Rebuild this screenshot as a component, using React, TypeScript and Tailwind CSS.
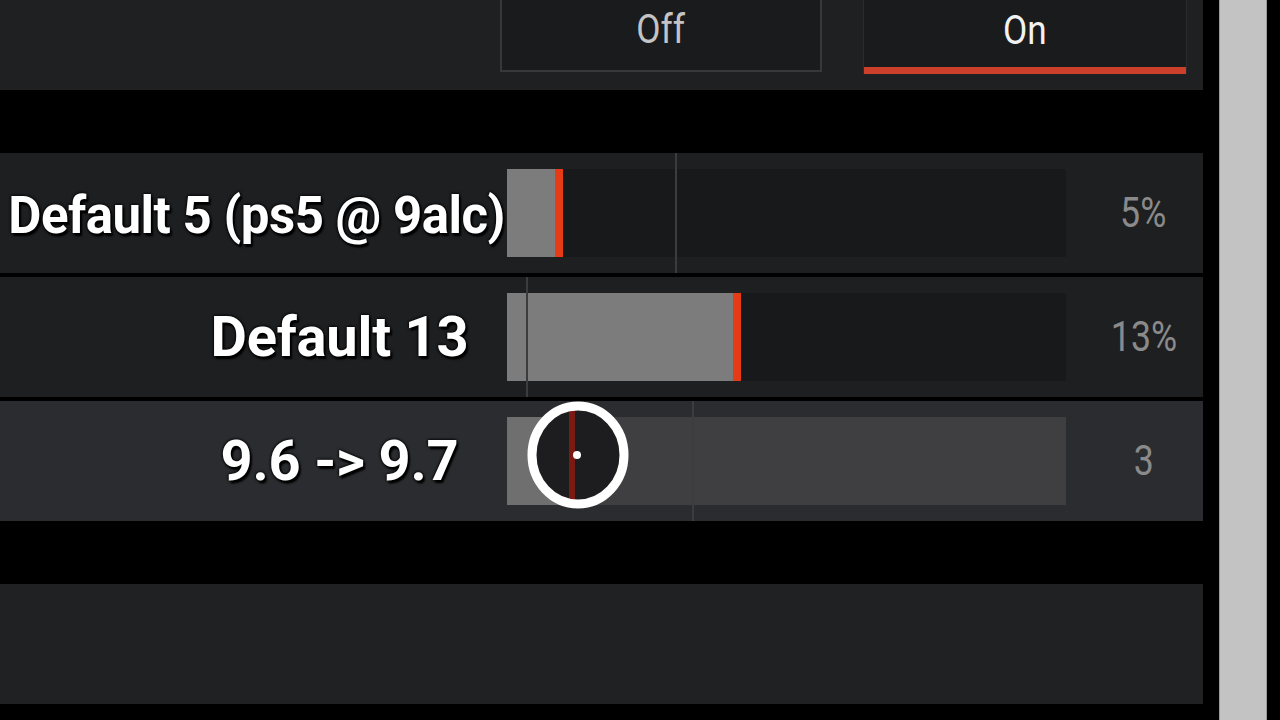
import React from "react";

// Settings rows with sliders, like a console game menu.
interface SliderRowProps {
  label: string;
  align: "right" | "center";
  fill: number; // width of fill in px
  marker: number; // x of the reference line within the row, px
  value: string;
  light?: boolean;
  cursor?: boolean;
  small?: boolean;
}

const labelShadow =
  "[text-shadow:0_0_3px_#000,0_0_3px_#000,2px_3px_2px_#000]";

const SliderRow: React.FC<SliderRowProps> = ({
  label,
  align,
  fill,
  marker,
  value,
  light,
  cursor,
  small,
}) => {
  return (
    <div
      className={`relative flex items-center h-[120px] ${
        light ? "bg-[#2b2c2f]" : "bg-[#1e1f21]"
      }`}
    >
      <div className="w-[507px] h-full flex items-center justify-end">
        <div
          className={
            align === "center"
              ? "w-[335px] flex justify-center"
              : "flex justify-end pr-[2px] pt-[4px]"
          }
        >
          <span
            className={`whitespace-nowrap text-white font-bold leading-none ${
              small
                ? "text-[51px] tracking-[-0.5px]"
                : "text-[56px] tracking-[-0.2px]"
            } ${labelShadow}`}
            style={{ fontFamily: "Roboto, 'Noto Sans', sans-serif" }}
          >
            {label}
          </span>
        </div>
      </div>

      <div
        className={`flex h-[88px] w-[559px] ${
          light ? "bg-[#3f3f42]" : "bg-[#18191b]"
        }`}
      >
        <div
          className={`h-full ${light ? "bg-[#6f6f6f]" : "bg-[#7c7c7c]"}`}
          style={{ width: fill }}
        />
        {!light && <div className="h-full w-[8px] bg-[#e63b17]" />}
      </div>

      <div className="flex-1 flex justify-center pl-[18px]">
        <span
          className="text-[42px] leading-none text-[#8a8a8a] scale-x-[0.85]"
          style={{ fontFamily: "Roboto, 'Noto Sans', sans-serif" }}
        >
          {value}
        </span>
      </div>

      {/* reference marker line */}
      <div
        className="absolute top-0 bottom-0 w-[2px] bg-[#3b3c3f]"
        style={{ left: marker }}
      />

      {cursor && (
        <svg
          className="absolute left-[524px] top-[-2px]"
          width="108"
          height="112"
          viewBox="0 0 108 112"
        >
          <ellipse cx="54" cy="56" rx="46" ry="49" fill="#1d1d1f" />
          <rect x="45" y="8" width="6" height="96" fill="#7a1a12" />
          <ellipse
            cx="54"
            cy="56"
            rx="46"
            ry="49"
            fill="none"
            stroke="#ffffff"
            strokeWidth="9"
          />
          <circle cx="53" cy="56" r="4" fill="#ffffff" />
        </svg>
      )}
    </div>
  );
};

export default function App() {
  const condensed = { fontFamily: "Roboto, 'Noto Sans', sans-serif" };
  return (
    <div className="w-[1280px] h-[720px] bg-black flex overflow-hidden">
      <div className="w-[1203px] flex flex-col">
        {/* top toggle panel */}
        <div className="h-[90px] bg-[#1f2022] flex pl-[500px] gap-[41px]">
          <div className="w-[322px] h-[72px] bg-[#1a1b1d] border-x-2 border-b-2 border-[#37383a] flex items-center justify-center">
            <span
              className="text-[40px] leading-none text-[#c4c4c4] scale-x-[0.88] -mt-[10px]"
              style={condensed}
            >
              Off
            </span>
          </div>
          <div className="w-[324px] h-[74px] bg-[#1a1b1d] border-x border-[#2a2b2d] flex flex-col">
            <div className="flex-1 flex items-center justify-center">
              <span
                className="text-[40px] leading-none text-[#f2f2f2] scale-x-[0.88] -mt-[6px]"
                style={condensed}
              >
                On
              </span>
            </div>
            <div className="h-[7px] bg-[#cc3f2b]" />
          </div>
        </div>

        <div className="h-[63px]" />

        <div className="flex flex-col gap-[4px]">
          <SliderRow
            label="Default 5 (ps5 @ 9alc)"
            align="right"
            fill={48}
            marker={675}
            value="5%"
            small
          />
          <SliderRow
            label="Default 13"
            align="center"
            fill={226}
            marker={526}
            value="13%"
          />
          <SliderRow
            label="9.6 -> 9.7"
            align="center"
            fill={64}
            marker={692}
            value="3"
            light
            cursor
          />
        </div>

        <div className="h-[63px]" />

        <div className="h-[120px] bg-[#202123]" />
      </div>

      <div className="w-[16px]" />
      <div className="w-[48px] h-full bg-[#c3c3c3] border-x border-[#9a9a9a]" />
    </div>
  );
}
